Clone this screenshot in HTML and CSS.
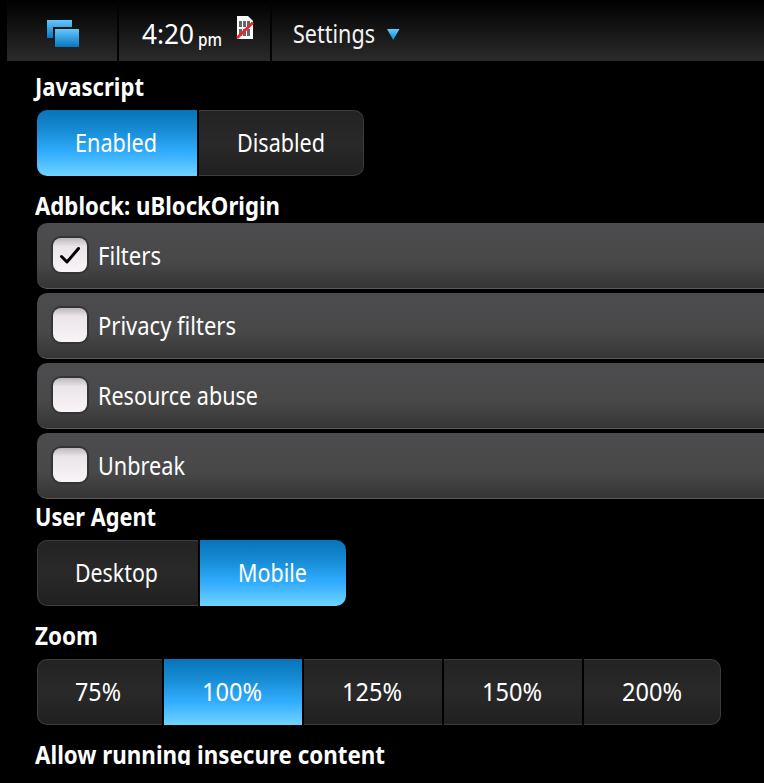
FILE: index.html
```
<!DOCTYPE html>
<html lang="en">
<head>
<meta charset="utf-8">
<title>Settings</title>
<link rel="stylesheet" href="styles.css">
</head>
<body>
<header class="bar">
  <div class="tasks">
    <svg width="34" height="29" viewBox="0 0 34 29">
      <defs><linearGradient id="b" x1="0" y1="0" x2="0" y2="1"><stop offset="0" stop-color="#64c8ff"/><stop offset="1" stop-color="#0876bf"/></linearGradient></defs>
      <path d="M0 0H25V7H6V18H0Z" fill="url(#b)"/>
      <rect x="8" y="9" width="24" height="18" fill="url(#b)"/>
      <path d="M0 .5H25M8 9.5H32" stroke="#63c6f8"/>
    </svg>
  </div>
  <div class="status">
    <span class="time fit" data-w="52">4:20</span>
    <span class="pm fit" data-w="24">pm</span>
    <svg class="sim" width="18" height="25" viewBox="0 0 18 25">
      <path d="M1 0H12L17 5V23H1Z" fill="#fff"/>
      <path d="M3 5H6V11H3ZM7 5H10V11H7ZM11 5H14V11H11ZM3 13H6V20H3ZM7 13H10V20H7ZM11 13H14V20H11Z" fill="#666"/>
      <path d="M1 22L17 6.500" stroke="#ed2430" stroke-width="2.800"/>
    </svg>
  </div>
  <div class="title">
    <span class="fit" data-w="82">Settings</span>
    <svg width="13" height="11" viewBox="0 0 13 11"><defs><linearGradient id="t" x1="0" y1="0" x2="0" y2="1"><stop offset="0" stop-color="#66ccff"/><stop offset="1" stop-color="#0b85d6"/></linearGradient></defs><path d="M0 0H12.500L6.250 11Z" fill="url(#t)"/></svg>
  </div>
</header>
<main>
  <h2 class="first"><span class="fit" data-w="109">Javascript</span></h2>
  <div class="group js">
    <button class="on"><span class="fit" data-w="82">Enabled</span></button>
    <button><span class="fit" data-w="88">Disabled</span></button>
  </div>
  <h2 class="filters-title"><span class="fit" data-w="245">Adblock: uBlockOrigin</span></h2>
  <div class="list">
    <div class="row"><i class="box"><svg width="34" height="34" viewBox="0 0 34 34"><path d="M8.500 18.500L14 24L25.500 10.500" fill="none" stroke="#000" stroke-width="3" stroke-linecap="round" stroke-linejoin="round"/></svg></i><span class="fit" data-w="63">Filters</span></div>
    <div class="row"><i class="box"></i><span class="fit" data-w="138">Privacy filters</span></div>
    <div class="row"><i class="box"></i><span class="fit" data-w="160">Resource abuse</span></div>
    <div class="row"><i class="box"></i><span class="fit" data-w="87">Unbreak</span></div>
  </div>
  <h2 class="agent-title"><span class="fit" data-w="121">User Agent</span></h2>
  <div class="group agent">
    <button><span class="fit" data-w="83">Desktop</span></button>
    <button class="on"><span class="fit" data-w="69">Mobile</span></button>
  </div>
  <h2><span class="fit" data-w="63">Zoom</span></h2>
  <div class="group zoom">
    <button><span class="fit" data-w="46">75%</span></button>
    <button class="on"><span class="fit" data-w="60">100%</span></button>
    <button><span class="fit" data-w="60">125%</span></button>
    <button><span class="fit" data-w="60">150%</span></button>
    <button><span class="fit" data-w="60">200%</span></button>
  </div>
  <h2 class="cut"><span class="fit" data-w="350">Allow running insecure content</span></h2>
</main>
<script src="fit.js"></script>
</body>
</html>
```
FILE: styles.css
```
* { box-sizing: border-box; }
body {
  margin: 0;
  height: 783px;
  overflow: hidden;
  background: #000;
  color: #fff;
  font: 25px/34px "Noto Sans", "Open Sans", sans-serif;
}
.fit { display: inline-block; white-space: nowrap; transform-origin: 0 50%; }
.bar {
  display: flex;
  height: 61px;
  margin-left: 7px;
  background: linear-gradient(#000, #111 40%, #2b2b2b);
}
.tasks { width: 112px; padding: 20px 0 0 40px; border-right: 2px solid #030303; }
.tasks svg, .title svg, .sim { display: block; flex: none; }
.status { display: flex; width: 153px; padding-left: 23px; border-right: 2px solid #030303; }
.time { font-size: 27px; margin-top: 17px; }
.pm { font-size: 18px; font-weight: 500; margin: 22px 0 0 4px; }
.sim { margin: 16px 0 0 14px; }
.title { display: flex; padding-left: 21px; color: #f2f2f2; }
.title .fit { margin-top: 16px; }
.title svg { margin: 29px 0 0 12px; }
main { padding-left: 37px; }
h2 { height: 34px; margin: 12px 0 7px -2px; font-size: 25px; font-weight: 700; }
h2.first { margin-top: 8px; }
h2.filters-title { margin-bottom: 1px; }
h2.agent-title { margin-top: 0; }
h2.cut { height: 28px; margin-bottom: 0; overflow: hidden; }
.group { display: grid; gap: 2px; height: 66px; }
.js { grid-template-columns: 160px 165px; }
.agent { grid-template-columns: 161px 146px; }
.zoom { grid-template-columns: 125px repeat(3, 138px) 137px; }
button {
  display: flex;
  align-items: flex-start;
  height: 66px;
  padding: 14px 0 0 38px;
  border: solid #3d3d3f;
  border-width: 1px 0;
  background: linear-gradient(#232324, #29292a 50%, #202021);
  color: #fff;
  font: inherit;
}
button:first-child { padding-left: 37px; border-left-width: 1px; border-radius: 10px 0 0 10px; }
button:last-child { border-right-width: 1px; border-radius: 0 10px 10px 0; }
button.on {
  padding: 15px 0 0 38px;
  border: 0;
  background: linear-gradient(#0873b9, #168bd3 30%, #32adff 65%, #70d4ff);
}
.list { display: grid; gap: 4px; }
.row {
  display: flex;
  height: 66px;
  padding: 15px 0 0 16px;
  border-bottom: 1px solid #5b5b5c;
  border-radius: 10px 0 0 10px;
  background: linear-gradient(#4c4c4e, #484849 60%, #353536);
}
.box {
  width: 34px;
  height: 34px;
  margin: 0 11px 0 0;
  flex: none;
  border-radius: 8px;
  background: linear-gradient(#bcb8bb, #e9e5e9 25%, #f8f4f8);
  box-shadow: 0 0 0 2px #343435;
}
.box svg { display: block; }
```
FILE: fit.js
```
// Condense each label horizontally to its specified advance width.
for (const label of document.querySelectorAll('.fit')) {
  const natural = label.getBoundingClientRect().width;
  const target = Number(label.dataset.w);
  label.style.transform = `scaleX(${target / natural})`;
  label.style.marginRight = `${parseFloat(getComputedStyle(label).marginRight) + target - natural}px`;
}
```
